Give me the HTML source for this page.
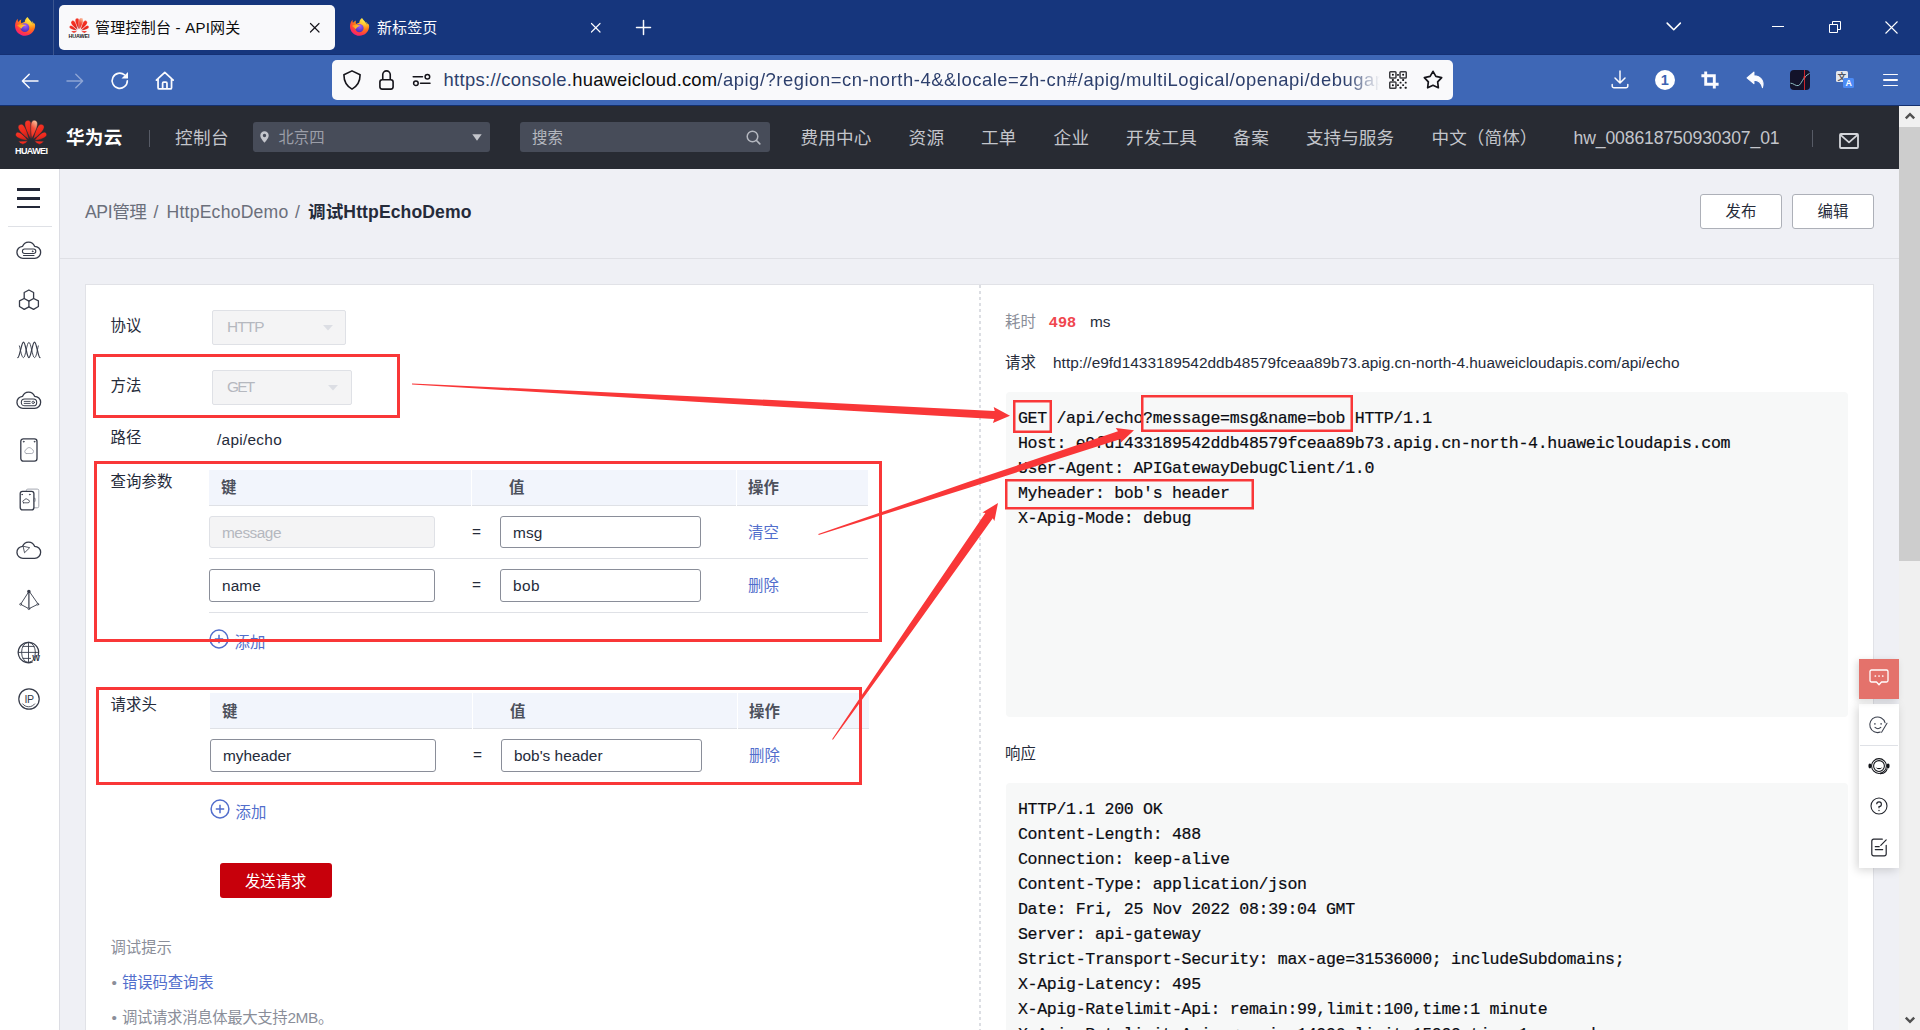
<!DOCTYPE html>
<html lang="zh-CN"><head><meta charset="utf-8"><title>管理控制台 - API网关</title>
<style>

*{box-sizing:border-box;margin:0;padding:0}
html,body{width:1920px;height:1030px;overflow:hidden;background:#eff0f5}
body{position:relative;font-family:"Liberation Sans","Noto Sans CJK SC",sans-serif;font-size:15.4px;color:#252b3a}
.a{position:absolute}
.t{position:absolute;white-space:pre;display:block}
svg{position:absolute;overflow:visible}
#tabbar{left:0;top:0;width:1920px;height:55px;background:#16367d;border-bottom:1px solid #143074}
#toolbar{left:0;top:55px;width:1920px;height:51px;background:#3e67b6;border-bottom:1px solid #14306f}
#hdr{left:0;top:106px;width:1899px;height:63px;background:#282b33}
#side{left:0;top:169px;width:60px;height:861px;background:#fff;border-right:1px solid #dcdde3}
#card{left:85px;top:284px;width:1789px;height:760px;background:#fff;border:1px solid #e1e2e7}
.sel{background:#f4f4f5;border:1px solid #dfe1e6;border-radius:2px}
.inp{background:#fff;border:1px solid #8a8e99;border-radius:3px}
.inp.dis{background:#f4f4f5;border-color:#dfe1e6}
.th{background:#f2f5fc;border-bottom:1px solid #dfe1e6;height:36px}
.hl{height:1px;background:#dfe1e6}
.btn{background:#fff;border:1px solid #adb0b8;border-radius:3px}
.code{background:#f7f8f8;border-radius:4px}
.hbox{background:#474c59;border-radius:3px}

</style></head>
<body>
<div class="a" id="tabbar">
<svg style="left:14px;top:15.8px" width="22" height="22" viewBox="0 0 24 24"><defs><radialGradient id="faa" cx="0.750" cy="0.100" r="1.050"><stop offset="0" stop-color="#fff44f"/><stop offset="0.280" stop-color="#ffc22e"/><stop offset="0.520" stop-color="#ff7a16"/><stop offset="0.780" stop-color="#ff3647"/><stop offset="1" stop-color="#f5158f"/></radialGradient><radialGradient id="fba" cx="0.550" cy="0.250" r="0.800"><stop offset="0" stop-color="#a35cff"/><stop offset="1" stop-color="#3f2bb5"/></radialGradient><linearGradient id="fca" x1="0" y1="0" x2="1" y2="0.400"><stop offset="0" stop-color="#ff8a16"/><stop offset="1" stop-color="#ffd23a"/></linearGradient></defs><path d="M21.600 8.300c-.5-1.200-1.500-2.500-2.300-2.900.6 1.200 1 2.500 1.100 3.400-1.300-3.200-3.500-4.500-5.300-7.300-.1-.2-.2-.3-.3-.5-1.800 1.100-3 3.400-3.100 5.600-1.300.1-2.500.6-3.500 1.400-.1-.1-.2-.2-.3-.2-.4-1.300-.4-2.700 0-3.900-1.400.6-2.500 1.600-3.300 2.600-.6-.7-.5-3-.5-3.500-1.700 1.300-3 4.700-3 7.500 0 6.100 4.900 11 11 11 5.400 0 9.900-3.900 10.800-9.100.3-1.500.1-3-.3-4.100z" fill="url(#faa)"/><circle cx="11.900" cy="12.700" r="4.800" fill="url(#fba)"/><path d="M3.300 10.300C5.600 8.700 9 8.500 13 10.100C10.600 10.700 9 11.700 7.800 13.900C6.800 12.500 5 11.100 3.300 10.300Z" fill="url(#fca)"/></svg>
<div class="a" style="left:53px;top:0;width:1px;height:55px;background:#3c568f"></div>
<div class="a" style="left:59px;top:5px;width:276px;height:45px;background:#f9f9fb;border-radius:5px"></div>
<svg style="left:68.7px;top:17.7px" width="20.3" height="15.2" viewBox="128 150 708 520" preserveAspectRatio="none"><defs><linearGradient id="hwf" x1="0" y1="0" x2="0.300" y2="1"><stop offset="0" stop-color="#f63a2a"/><stop offset="0.600" stop-color="#f0281c"/><stop offset="1" stop-color="#c4251f"/></linearGradient><linearGradient id="hxf" x1="0.600" y1="0" x2="0.300" y2="1"><stop offset="0" stop-color="#fbbf98"/><stop offset="0.450" stop-color="#f4503a"/><stop offset="1" stop-color="#ee2a1e"/></linearGradient></defs><g fill="url(#hwf)" stroke="#f9f9fb" stroke-width="9"><path d="M468.0 538.0 C504.6 355.8 510.6 132.3 400.0 160.0 C286.7 172.6 370.2 380.0 468.0 538.0 Z"/><path d="M496.0 538.0 C593.8 380.0 677.3 172.6 564.0 160.0 C453.4 132.3 459.4 355.8 496.0 538.0 Z"/><path d="M432.0 556.0 C396.1 381.7 317.0 183.4 228.0 252.0 C130.8 308.4 284.3 456.7 432.0 556.0 Z"/><path d="M532.0 556.0 C679.7 456.7 833.2 308.4 736.0 252.0 C647.0 183.4 567.9 381.7 532.0 556.0 Z"/><path d="M412.0 582.0 C321.2 467.1 190.0 350.0 150.0 432.0 C99.5 508.0 267.0 561.9 412.0 582.0 Z"/><path d="M552.0 582.0 C697.0 561.9 864.5 508.0 814.0 432.0 C774.0 350.0 642.8 467.1 552.0 582.0 Z"/><path d="M402 592L205 598Q240 655 300 662Q370 650 402 592Z"/><path d="M562 592L759 598Q724 655 664 662Q594 650 562 592Z"/><path d="M496.0 538.0 C593.8 380.0 677.3 172.6 564.0 160.0 C453.4 132.3 459.4 355.8 496.0 538.0 Z" fill="url(#hxf)"/></g></svg>
<span class="t" style='left:68.5px;top:32.3px;font-size:5.4px;line-height:8px;color:#1a1a1a;font-weight:700;letter-spacing:-0.094px;'>HUAWEI</span>
<span class="t" style='left:95px;top:16px;font-size:15px;line-height:24px;color:#0c0c0d;letter-spacing:0.230px;'>管理控制台 - API网关</span>
<svg style="left:310.25px;top:22.75px;" width="9.5" height="9.5" viewBox="0 0 10 10"><path d="M0.500 0.500L9.500 9.500M9.500 0.500L0.500 9.500" stroke="#15141a" stroke-width="1.2" stroke-linecap="round" fill="none"/></svg>
<svg style="left:349px;top:16.7px" width="21" height="21" viewBox="0 0 24 24"><defs><radialGradient id="fab" cx="0.750" cy="0.100" r="1.050"><stop offset="0" stop-color="#fff44f"/><stop offset="0.280" stop-color="#ffc22e"/><stop offset="0.520" stop-color="#ff7a16"/><stop offset="0.780" stop-color="#ff3647"/><stop offset="1" stop-color="#f5158f"/></radialGradient><radialGradient id="fbb" cx="0.550" cy="0.250" r="0.800"><stop offset="0" stop-color="#a35cff"/><stop offset="1" stop-color="#3f2bb5"/></radialGradient><linearGradient id="fcb" x1="0" y1="0" x2="1" y2="0.400"><stop offset="0" stop-color="#ff8a16"/><stop offset="1" stop-color="#ffd23a"/></linearGradient></defs><path d="M21.600 8.300c-.5-1.200-1.500-2.500-2.300-2.900.6 1.200 1 2.500 1.100 3.400-1.300-3.200-3.500-4.500-5.300-7.300-.1-.2-.2-.3-.3-.5-1.800 1.100-3 3.400-3.100 5.600-1.300.1-2.500.6-3.500 1.400-.1-.1-.2-.2-.3-.2-.4-1.300-.4-2.700 0-3.900-1.400.6-2.500 1.600-3.300 2.600-.6-.7-.5-3-.5-3.500-1.700 1.300-3 4.700-3 7.500 0 6.100 4.900 11 11 11 5.400 0 9.900-3.900 10.800-9.100.3-1.500.1-3-.3-4.100z" fill="url(#fab)"/><circle cx="11.900" cy="12.700" r="4.800" fill="url(#fbb)"/><path d="M3.300 10.300C5.600 8.700 9 8.500 13 10.100C10.600 10.700 9 11.700 7.800 13.900C6.800 12.500 5 11.100 3.300 10.300Z" fill="url(#fcb)"/></svg>
<span class="t" style='left:377px;top:16px;font-size:15px;line-height:24px;color:#fbfbfe;letter-spacing:0.121px;'>新标签页</span>
<svg style="left:591.25px;top:22.75px;" width="9.5" height="9.5" viewBox="0 0 10 10"><path d="M0.500 0.500L9.500 9.500M9.500 0.500L0.500 9.500" stroke="#fbfbfe" stroke-width="1.2" stroke-linecap="round" fill="none"/></svg>
<svg style="left:636px;top:20px;" width="15" height="15" viewBox="0 0 15 15"><path d="M7.500 0.500V14.500M0.500 7.500H14.500" stroke="#fbfbfe" stroke-width="1.500" stroke-linecap="round"/></svg>
<svg style="left:1666.25px;top:22.4px;" width="15.5" height="8.8" viewBox="0 0 14 8"><path d="M1 1L7 7L13 1" stroke="#fff" stroke-width="1.400" fill="none" stroke-linecap="round" stroke-linejoin="round"/></svg>
<div class="a" style="left:1772px;top:26px;width:12px;height:1px;background:#fff"></div>
<svg style="left:1829px;top:21px;" width="12" height="12" viewBox="0 0 12 12"><path d="M0.500 3.500H8.500V11.500H0.500ZM3.500 3.500V0.500H11.500V8.500H8.500" stroke="#fff" stroke-width="1" fill="none"/></svg>
<svg style="left:1884.5px;top:20.5px;" width="13" height="13" viewBox="0 0 13 13"><path d="M0.500 0.500L12.500 12.500M12.500 0.500L0.500 12.500" stroke="#fff" stroke-width="1.100" fill="none"/></svg>
</div>
<div class="a" id="toolbar">
<svg style="left:21px;top:17.7px;" width="18" height="16" viewBox="0 0 18 16"><path d="M17 8H1.500M8.200 1.200L1.400 8L8.200 14.800" stroke="#fbfbfe" stroke-width="1.450" fill="none" stroke-linecap="round" stroke-linejoin="round"/></svg>
<svg style="left:66px;top:17.7px;" width="18" height="16" viewBox="0 0 18 16"><path d="M1 8H16.500M9.800 1.200L16.600 8L9.800 14.800" stroke="#fbfbfe" stroke-width="1.450" fill="none" stroke-linecap="round" stroke-linejoin="round" opacity="0.420"/></svg>
<svg style="left:110.25px;top:16.25px;" width="19.5" height="19.5" viewBox="0 0 18 18"><path d="M16 9A7 7 0 1 1 13.400 3.550" stroke="#fbfbfe" stroke-width="1.500" fill="none" stroke-linecap="round"/><path d="M16.600 1V7H10.600Z" fill="#fbfbfe"/></svg>
<svg style="left:154.5px;top:15.8px;" width="19.6" height="19.6" viewBox="0 0 18 18"><path d="M1.300 8.300L9 1.200L16.700 8.300M2.800 7V15.300A1.200 1.200 0 0 0 4 16.500H14A1.200 1.200 0 0 0 15.200 15.300V7M7 16.300V11.300A1 1 0 0 1 8 10.300H10A1 1 0 0 1 11 11.300V16.300" stroke="#fbfbfe" stroke-width="1.600" fill="none" stroke-linecap="round" stroke-linejoin="round"/></svg>
<div class="a" style="left:332px;top:5px;width:1121px;height:40px;background:#f9f9fb;border-radius:5px"></div>
<svg style="left:343.1px;top:14.9px;" width="18" height="20" viewBox="0 0 18 20"><path d="M9 0.900L17.100 4.700C17.100 11.500 14.500 16 9 19.100C3.500 16 0.900 11.500 0.900 4.700Z" stroke="#15141a" stroke-width="1.600" fill="none" stroke-linejoin="round"/></svg>
<svg style="left:379.3px;top:14.8px;" width="15" height="20" viewBox="0 0 15 20"><rect x="0.900" y="9.800" width="13.200" height="9.300" rx="2.300" stroke="#15141a" stroke-width="1.600" fill="none"/><path d="M3.750 9.500V4.600A3.750 3.750 0 0 1 11.250 4.600V9.500" stroke="#15141a" stroke-width="1.600" fill="none"/></svg>
<svg style="left:412.3px;top:18.9px;" width="19" height="12" viewBox="0 0 19 12"><path d="M1.200 2.800H10.500M8.500 9.200H18" stroke="#15141a" stroke-width="1.500" stroke-linecap="round"/><circle cx="15.400" cy="2.800" r="2.300" stroke="#15141a" stroke-width="1.500" fill="none"/><circle cx="3.900" cy="9.200" r="2.300" stroke="#15141a" stroke-width="1.500" fill="none"/></svg>
<span class="t" style='left:443.5px;top:11.3px;font-size:18.4px;line-height:28px;color:#2d3f6c;letter-spacing:0.319px;'>https://console.</span>
<span class="t" style='left:572.3px;top:11.3px;font-size:18.4px;line-height:28px;color:#0c0c0d;letter-spacing:0.193px;'>huaweicloud.com</span>
<span class="t" style='left:717.3px;top:11.3px;font-size:18.4px;line-height:28px;color:#2d3f6c;letter-spacing:0.540px;width:663px;overflow:hidden;-webkit-mask-image:linear-gradient(90deg,#000 630px,transparent 663px);mask-image:linear-gradient(90deg,#000 630px,transparent 663px);'>/apig/?region=cn-north-4&amp;&amp;locale=zh-cn#/apig/multiLogical/openapi/debugap</span>
<svg style="left:1389px;top:16px;" width="18" height="18" viewBox="0 0 18 18"><rect x="0.75" y="0.75" width="6.21" height="6.21" rx="0.800" stroke="#3b3b3f" stroke-width="1.500" fill="none"/><circle cx="3.86" cy="3.86" r="1" fill="#0c0c0d"/><rect x="11.04" y="0.75" width="6.21" height="6.21" rx="0.800" stroke="#3b3b3f" stroke-width="1.500" fill="none"/><circle cx="14.14" cy="3.86" r="1" fill="#0c0c0d"/><rect x="0.75" y="11.04" width="6.21" height="6.21" rx="0.800" stroke="#3b3b3f" stroke-width="1.500" fill="none"/><circle cx="3.86" cy="14.14" r="1" fill="#0c0c0d"/><rect x="8.06" y="2.92" width="1.87" height="1.87" rx="0.500" fill="#1c1c1e"/><rect x="2.92" y="8.06" width="1.87" height="1.87" rx="0.500" fill="#1c1c1e"/><rect x="8.06" y="8.06" width="1.87" height="1.87" rx="0.500" fill="#1c1c1e"/><rect x="13.21" y="8.06" width="1.87" height="1.87" rx="0.500" fill="#1c1c1e"/><rect x="10.64" y="10.64" width="1.87" height="1.87" rx="0.500" fill="#1c1c1e"/><rect x="15.78" y="10.64" width="1.87" height="1.87" rx="0.500" fill="#1c1c1e"/><rect x="8.06" y="13.21" width="1.87" height="1.87" rx="0.500" fill="#1c1c1e"/><rect x="13.21" y="13.21" width="1.87" height="1.87" rx="0.500" fill="#1c1c1e"/><rect x="10.64" y="15.78" width="1.87" height="1.87" rx="0.500" fill="#1c1c1e"/><rect x="15.78" y="15.78" width="1.87" height="1.87" rx="0.500" fill="#1c1c1e"/></svg>
<svg style="left:1423px;top:15.4px;" width="20" height="19" viewBox="0 0 20 19"><path d="M10.00 1.30L12.88 6.44L18.65 7.59L14.66 11.91L15.35 17.76L10.00 15.30L4.65 17.76L5.34 11.91L1.35 7.59L7.12 6.44Z" stroke="#15141a" stroke-width="1.700" fill="none" stroke-linejoin="round"/></svg>
<svg style="left:1610.5px;top:14.7px;" width="18" height="19" viewBox="0 0 18 19"><path d="M9 1V12.500M4 8L9 13L14 8M1.200 14.500V16A1.800 1.800 0 0 0 3 17.800H15A1.800 1.800 0 0 0 16.800 16V14.500" stroke="#fbfbfe" stroke-width="1.500" fill="none" stroke-linecap="round" stroke-linejoin="round"/></svg>
<div class="a" style="left:1655px;top:15px;width:20px;height:20px;border-radius:10px;background:#fff"></div>
<span class="t" style='left:1660.8px;top:17.3px;font-size:14.5px;line-height:16px;color:#3b63b2;font-weight:700;'>1</span>
<svg style="left:1701px;top:15.8px;" width="18" height="18" viewBox="0 0 18 18"><path d="M4.700 0.400V13.300H17.600M0.400 4.700H13.300V17.600" stroke="#fbfbfe" stroke-width="2.900" fill="none"/></svg>
<svg style="left:1745.8px;top:15.8px;" width="19" height="18" viewBox="0 0 18 17"><path d="M7.500 1L1 6.500L7.500 12V8.600C11.500 8.600 14.500 10.500 15.600 15.800C17.600 9.500 14 4.600 7.500 4.400Z" fill="#fbfbfe" stroke="#fbfbfe" stroke-width="1" stroke-linejoin="round"/></svg>
<div class="a" style="left:1790px;top:15px;width:20px;height:20px;border-radius:4px;background:#13122a;overflow:hidden"><div class="a" style="left:14px;top:0;width:1px;height:20px;background:#c9252c"></div></div>
<svg style="left:1790px;top:15px;" width="20" height="20" viewBox="0 0 20 20"><path d="M0.500 13.200C3.500 13 5.500 16.500 8.500 15.500S12.500 7 19.500 3.500" stroke="#9fd3d6" stroke-width="0.900" fill="none"/><circle cx="14.500" cy="7.300" r="1.100" fill="#f03a3a"/></svg>
<div class="a" style="left:1836px;top:16.200px;width:11.500px;height:10.500px;border-radius:1.500px;background:#e3e6ec"></div>
<span class="t" style='left:1837.4px;top:16.6px;font-size:8.6px;line-height:10px;color:#4f5562;font-weight:700;'>文</span>
<div class="a" style="left:1843.300px;top:23px;width:10.400px;height:10.400px;border-radius:1.500px;background:#4c8bf5"></div>
<span class="t" style='left:1845.5px;top:23.3px;font-size:8.8px;line-height:10px;color:#fff;font-weight:700;'>A</span>
<div class="a" style="left:1882.500px;top:18.8px;width:15px;height:1.400px;background:#fbfbfe;border-radius:1px"></div>
<div class="a" style="left:1882.500px;top:24.3px;width:15px;height:1.400px;background:#fbfbfe;border-radius:1px"></div>
<div class="a" style="left:1882.500px;top:29.8px;width:15px;height:1.400px;background:#fbfbfe;border-radius:1px"></div>
</div>
<div class="a" id="hdr"></div>
<svg style="left:15.2px;top:119.6px" width="32.3" height="24.8" viewBox="128 150 708 520" preserveAspectRatio="none"><defs><linearGradient id="hwh" x1="0" y1="0" x2="0.300" y2="1"><stop offset="0" stop-color="#f63a2a"/><stop offset="0.600" stop-color="#f0281c"/><stop offset="1" stop-color="#c4251f"/></linearGradient><linearGradient id="hxh" x1="0.600" y1="0" x2="0.300" y2="1"><stop offset="0" stop-color="#fbbf98"/><stop offset="0.450" stop-color="#f4503a"/><stop offset="1" stop-color="#ee2a1e"/></linearGradient></defs><g fill="url(#hwh)" stroke="#282b33" stroke-width="9"><path d="M468.0 538.0 C504.6 355.8 510.6 132.3 400.0 160.0 C286.7 172.6 370.2 380.0 468.0 538.0 Z"/><path d="M496.0 538.0 C593.8 380.0 677.3 172.6 564.0 160.0 C453.4 132.3 459.4 355.8 496.0 538.0 Z"/><path d="M432.0 556.0 C396.1 381.7 317.0 183.4 228.0 252.0 C130.8 308.4 284.3 456.7 432.0 556.0 Z"/><path d="M532.0 556.0 C679.7 456.7 833.2 308.4 736.0 252.0 C647.0 183.4 567.9 381.7 532.0 556.0 Z"/><path d="M412.0 582.0 C321.2 467.1 190.0 350.0 150.0 432.0 C99.5 508.0 267.0 561.9 412.0 582.0 Z"/><path d="M552.0 582.0 C697.0 561.9 864.5 508.0 814.0 432.0 C774.0 350.0 642.8 467.1 552.0 582.0 Z"/><path d="M402 592L205 598Q240 655 300 662Q370 650 402 592Z"/><path d="M562 592L759 598Q724 655 664 662Q594 650 562 592Z"/><path d="M496.0 538.0 C593.8 380.0 677.3 172.6 564.0 160.0 C453.4 132.3 459.4 355.8 496.0 538.0 Z" fill="url(#hxh)"/></g></svg>
<span class="t" style='left:15px;top:145.9px;font-size:9px;line-height:10px;color:#fff;font-weight:700;letter-spacing:-0.617px;'>HUAWEI</span>
<span class="t" style='left:66px;top:126.2px;font-size:18.6px;line-height:24px;color:#fff;font-weight:700;letter-spacing:0.234px;'>华为云</span>
<div class="a" style="left:149px;top:130px;width:1px;height:17px;background:#575b66"></div>
<span class="t" style='left:175px;top:126.2px;font-size:17.6px;line-height:24px;color:#c3c5cb;letter-spacing:0.401px;'>控制台</span>
<div class="a hbox" style="left:253px;top:122px;width:237px;height:30px"></div>
<svg style="left:259.5px;top:131px;" width="9" height="12" viewBox="0 0 9 12"><path d="M4.500 0.300A4.200 4.200 0 0 0 0.300 4.500C0.300 7.500 4.500 11.700 4.500 11.700S8.700 7.500 8.700 4.500A4.200 4.200 0 0 0 4.500 0.300ZM4.500 6.200A1.700 1.700 0 1 1 4.500 2.800A1.700 1.700 0 0 1 4.500 6.200Z" fill="#c3c5cb" fill-rule="evenodd"/></svg>
<span class="t" style='left:278.5px;top:126px;font-size:15.4px;line-height:24px;color:#9b9ea8;letter-spacing:-0.062px;'>北京四</span>
<svg style="left:472px;top:134px;" width="10" height="7" viewBox="0 0 10 7"><path d="M0.300 0.300H9.700L5 6.800Z" fill="#c3c5cb"/></svg>
<div class="a hbox" style="left:520px;top:122px;width:250px;height:30px"></div>
<span class="t" style='left:532px;top:126px;font-size:15.4px;line-height:24px;color:#b4b7bf;letter-spacing:0.102px;'>搜索</span>
<svg style="left:746px;top:129.5px;" width="15" height="15" viewBox="0 0 15 15"><circle cx="6.500" cy="6.500" r="5.300" stroke="#b4b7bf" stroke-width="1.500" fill="none"/><path d="M10.500 10.500L13.800 13.800" stroke="#b4b7bf" stroke-width="1.700" stroke-linecap="round"/></svg>
<span class="t" style='left:800.5px;top:126.2px;font-size:17.6px;line-height:24px;color:#c3c5cb;letter-spacing:0.152px;'>费用中心</span>
<span class="t" style='left:908.5px;top:126.2px;font-size:17.6px;line-height:24px;color:#c3c5cb;letter-spacing:0.398px;'>资源</span>
<span class="t" style='left:981px;top:126.2px;font-size:17.6px;line-height:24px;color:#c3c5cb;letter-spacing:0.148px;'>工单</span>
<span class="t" style='left:1053.5px;top:126.2px;font-size:17.6px;line-height:24px;color:#c3c5cb;letter-spacing:0.398px;'>企业</span>
<span class="t" style='left:1126px;top:126.2px;font-size:17.6px;line-height:24px;color:#c3c5cb;letter-spacing:0.152px;'>开发工具</span>
<span class="t" style='left:1233px;top:126.2px;font-size:17.6px;line-height:24px;color:#c3c5cb;letter-spacing:0.648px;'>备案</span>
<span class="t" style='left:1306px;top:126.2px;font-size:17.6px;line-height:24px;color:#c3c5cb;'>支持与服务</span>
<span class="t" style='left:1431.5px;top:126.2px;font-size:17.6px;line-height:24px;color:#c3c5cb;letter-spacing:0.070px;'>中文（简体）</span>
<span class="t" style='left:1573.5px;top:126.2px;font-size:17.6px;line-height:24px;color:#c3c5cb;letter-spacing:-0.115px;'>hw_008618750930307_01</span>
<div class="a" style="left:1812px;top:130px;width:1px;height:17px;background:#575b66"></div>
<svg style="left:1838.5px;top:132.5px;" width="20" height="16" viewBox="0 0 20 16"><rect x="1" y="1" width="18" height="14" rx="1" stroke="#d4d6db" stroke-width="1.800" fill="none"/><path d="M1.500 1.800L10 9.300L18.500 1.800" stroke="#d4d6db" stroke-width="1.800" fill="none" stroke-linejoin="round"/></svg>
<div class="a" style="left:1899px;top:106px;width:21px;height:924px;background:#f0f0f0"></div>
<div class="a" style="left:1899px;top:127px;width:21px;height:434px;background:#cdcdcd"></div>
<svg style="left:1904.5px;top:113px;" width="10" height="6" viewBox="0 0 10 6"><path d="M0.800 5.400L5 1.200L9.200 5.400" stroke="#505050" stroke-width="2.400" fill="none"/></svg>
<svg style="left:1904.5px;top:1017px;" width="10" height="6" viewBox="0 0 10 6"><path d="M0.800 0.600L5 4.800L9.200 0.600" stroke="#505050" stroke-width="2.400" fill="none"/></svg>
<div class="a" id="side"></div>
<div class="a" style="left:17.300px;top:188.1px;width:22.900px;height:2.8px;background:#232838"></div>
<div class="a" style="left:17.300px;top:197px;width:22.900px;height:2.8px;background:#232838"></div>
<div class="a" style="left:17.300px;top:205.8px;width:22.900px;height:2.3px;background:#232838"></div>
<div class="a" style="left:8px;top:226px;width:44px;height:1px;background:#dfe1e6"></div>
<svg style="left:16.9px;top:238px;" width="24" height="24" viewBox="0 0 24 24"><g stroke="#363b49" stroke-width="1.300" fill="none" stroke-linecap="round" stroke-linejoin="round"><path d="M6.300 20.300H17.700A6 6 0 1 0 17.600 8.300A6.350 6.350 0 0 0 5.600 8.300A6 6 0 0 0 6.300 20.300Z"/><rect x="5.400" y="11" width="13.400" height="4.500" rx="2.200" stroke-width="1.100"/><circle cx="15.600" cy="13.300" r="0.500" fill="#363b49" stroke-width="0.700"/><path d="M6.500 17.500H17" stroke-width="1"/></g></svg>
<svg style="left:16.9px;top:288.3px;" width="24" height="24" viewBox="0 0 24 24"><g stroke="#363b49" stroke-width="1.300" fill="none" stroke-linecap="round" stroke-linejoin="round"><path d="M11.900 2L16.600 4.500V10.500L11.900 13.100L7.200 10.500V4.500Z"/><path d="M7.200 10.500L2.500 12.900V18.500L7.200 21.400L11.900 18.900V13.100"/><path d="M16.600 10.500L21.400 12.900V18.500L16.600 21.400L11.900 18.900"/></g></svg>
<svg style="left:16.9px;top:338px;" width="24" height="24" viewBox="0 0 24 24"><g stroke="#363b49" stroke-width="1.300" fill="none" stroke-linecap="round" stroke-linejoin="round"><path d="M0.800 19.600C2.800 19.600 4.400 4 6.500 4C8.600 4 9.800 19.600 11.900 19.600C14 19.600 15.400 4 17.500 4C19.600 4 21 19.600 23 19.600" stroke-width="1.250"/><path d="M2.400 7.900C3.600 12 4.600 19.600 6.500 19.600C8.600 19.600 9.800 4.300 11.900 4.300C14 4.300 15.400 19.600 17.500 19.600C19.400 19.600 20.200 12 21.300 7.900" stroke-width="0.900"/></g></svg>
<svg style="left:16.9px;top:388px;" width="24" height="24" viewBox="0 0 24 24"><g stroke="#363b49" stroke-width="1.300" fill="none" stroke-linecap="round" stroke-linejoin="round"><path d="M6.300 20.300H17.700A6 6 0 1 0 17.600 8.300A6.350 6.350 0 0 0 5.600 8.300A6 6 0 0 0 6.300 20.300Z"/><rect x="4.300" y="11" width="15.400" height="6.800" rx="3.400" stroke-width="1.100"/><path d="M7.200 13.400H13.200M7.200 15.400H13.200" stroke-width="0.900"/><circle cx="16.200" cy="14.400" r="1.200" stroke-width="0.900"/></g></svg>
<svg style="left:16.9px;top:438px;" width="24" height="24" viewBox="0 0 24 24"><g stroke="#363b49" stroke-width="1.300" fill="none" stroke-linecap="round" stroke-linejoin="round"><rect x="3.800" y="0.800" width="16.200" height="22.400" rx="2.600"/><circle cx="6.700" cy="3.700" r="0.450" fill="#363b49" stroke-width="0.700"/><circle cx="17.500" cy="3.700" r="0.450" fill="#363b49" stroke-width="0.700"/><path d="M9.300 15.500H14.800A2.100 2.100 0 0 0 15 11.400A3.100 3.100 0 0 0 9.200 11.700A1.950 1.950 0 0 0 9.300 15.500Z" stroke="#9a9ea8" stroke-width="0.800"/></g></svg>
<svg style="left:16.9px;top:488px;" width="24" height="24" viewBox="0 0 24 24"><g stroke="#363b49" stroke-width="1.300" fill="none" stroke-linecap="round" stroke-linejoin="round"><path d="M9.300 3V2.600A1.500 1.500 0 0 1 10.800 1.100H20.300A1.500 1.500 0 0 1 21.800 2.600V18.300A1.500 1.500 0 0 1 20.300 19.800H17.300" stroke="#9a9ea8" stroke-width="0.900"/><rect x="17" y="10.300" width="1.500" height="3.200" rx="0.700" stroke="#9a9ea8" stroke-width="0.700"/><rect x="3.200" y="3.300" width="13.700" height="18.600" rx="2.300"/><circle cx="5.100" cy="6.600" r="0.400" fill="#363b49" stroke-width="0.700"/><circle cx="12.800" cy="6.600" r="0.400" fill="#363b49" stroke-width="0.700"/><path d="M6.600 14.800H11A1.400 1.400 0 0 0 11.100 12A2.100 2.100 0 0 0 7.200 12.300A1.300 1.300 0 0 0 6.600 14.800Z" stroke-width="0.800"/></g></svg>
<svg style="left:16.9px;top:538px;" width="24" height="24" viewBox="0 0 24 24"><g stroke="#363b49" stroke-width="1.300" fill="none" stroke-linecap="round" stroke-linejoin="round"><path d="M6.300 20.300H17.700A6 6 0 1 0 17.600 8.300A6.350 6.350 0 0 0 5.600 8.300A6 6 0 0 0 6.300 20.300Z"/><path d="M6.500 8.300L12.700 9.700L7.800 14.500Z" stroke-width="0.850"/></g></svg>
<svg style="left:16.9px;top:588px;" width="24" height="24" viewBox="0 0 24 24"><g stroke="#363b49" stroke-width="1.300" fill="none" stroke-linecap="round" stroke-linejoin="round"><path d="M11.900 3.500L3.600 16.300L11.900 20.700L20.800 16.300Z" stroke-width="0.900"/><path d="M11.900 3.500V20.700" stroke-width="1.200"/><circle cx="11.900" cy="3.500" r="1.100" fill="#363b49"/><circle cx="3.600" cy="16.300" r="0.900" fill="#fff" stroke-width="0.800"/><circle cx="20.800" cy="16.300" r="0.900" fill="#fff" stroke-width="0.800"/><circle cx="11.900" cy="20.700" r="0.900" fill="#fff" stroke-width="0.800"/></g></svg>
<svg style="left:16.9px;top:640px;" width="24" height="24" viewBox="0 0 24 24"><g stroke="#363b49" stroke-width="1.300" fill="none" stroke-linecap="round" stroke-linejoin="round"><path d="M15.300 21.950A10.200 10.200 0 1 1 21.100 15.800" stroke-width="1.250"/><ellipse cx="11.500" cy="12.400" rx="6.900" ry="10" stroke-width="0.900"/><path d="M1.500 12.400H21.500M5.800 6.400H17.200M6 18.400H13.600M11.500 2.300V22.400" stroke-width="0.900"/></g></svg>
<span class="t" style='left:32.2px;top:654.3px;font-size:8.2px;line-height:10px;color:#363b49;font-weight:700;letter-spacing:-1.734px;'>W</span>
<svg style="left:16.9px;top:687.4px;" width="24" height="24" viewBox="0 0 24 24"><g stroke="#363b49" stroke-width="1.300" fill="none" stroke-linecap="round" stroke-linejoin="round"><circle cx="12" cy="12" r="10.200" stroke-width="1.200"/><path d="M5.700 16.900A7.400 7.400 0 0 0 17.700 16.900" stroke-width="0.850"/></g></svg>
<span class="t" style='left:24.6px;top:693.2px;font-size:10.6px;line-height:12px;color:#363b49;letter-spacing:-0.658px;'>IP</span>
<span class="t" style='left:85px;top:199.5px;font-size:17.6px;line-height:24px;color:#6b6f7b;letter-spacing:-0.409px;'>API管理</span>
<span class="t" style='left:153.5px;top:199.5px;font-size:17.6px;line-height:24px;color:#6b6f7b;'>/</span>
<span class="t" style='left:166.5px;top:199.5px;font-size:17.6px;line-height:24px;color:#6b6f7b;letter-spacing:0.224px;'>HttpEchoDemo</span>
<span class="t" style='left:295px;top:199.5px;font-size:17.6px;line-height:24px;color:#6b6f7b;'>/</span>
<span class="t" style='left:308px;top:199.5px;font-size:17.6px;line-height:24px;color:#252b3a;font-weight:700;letter-spacing:0.088px;'>调试HttpEchoDemo</span>
<div class="a btn" style="left:1700px;top:194px;width:82px;height:35px"></div>
<div class="a btn" style="left:1792px;top:194px;width:82px;height:35px"></div>
<span class="t" style='left:1725.5px;top:200.1px;font-size:15.4px;line-height:24px;color:#252b3a;letter-spacing:0.102px;'>发布</span>
<span class="t" style='left:1817.5px;top:200.1px;font-size:15.4px;line-height:24px;color:#252b3a;letter-spacing:0.102px;'>编辑</span>
<div class="a" style="left:60px;top:258px;width:1839px;height:1px;background:#dfe0e5"></div>
<div class="a" id="card"></div>
<div class="a" style="left:979px;top:285px;width:2px;height:745px;background:repeating-linear-gradient(180deg,#dcdee3 0,#dcdee3 3px,transparent 3px,transparent 6px)"></div>
<span class="t" style='left:110.5px;top:314px;font-size:15.4px;line-height:24px;color:#252b3a;letter-spacing:0.102px;'>协议</span>
<div class="a sel" style="left:212px;top:310px;width:134px;height:35px"></div>
<span class="t" style='left:227px;top:314.9px;font-size:15.4px;line-height:24px;color:#b5b8bf;letter-spacing:-0.922px;'>HTTP</span>
<svg style="left:322.5px;top:325.05px;" width="10" height="5.5" viewBox="0 0 9 5"><path d="M0 0H9L4.500 5Z" fill="#dcdee4"/></svg>
<span class="t" style='left:110.5px;top:374px;font-size:15.4px;line-height:24px;color:#252b3a;letter-spacing:0.102px;'>方法</span>
<div class="a sel" style="left:212px;top:370px;width:140px;height:35px"></div>
<span class="t" style='left:227px;top:374.9px;font-size:15.4px;line-height:24px;color:#b5b8bf;letter-spacing:-1.714px;'>GET</span>
<svg style="left:328.3px;top:385.05px;" width="10" height="5.5" viewBox="0 0 9 5"><path d="M0 0H9L4.500 5Z" fill="#dcdee4"/></svg>
<span class="t" style='left:110.5px;top:426px;font-size:15.4px;line-height:24px;color:#252b3a;letter-spacing:0.102px;'>路径</span>
<span class="t" style='left:217px;top:427.5px;font-size:15.4px;line-height:24px;color:#252b3a;letter-spacing:0.281px;'>/api/echo</span>
<span class="t" style='left:110.5px;top:470.3px;font-size:15.4px;line-height:24px;color:#252b3a;letter-spacing:0.130px;'>查询参数</span>
<div class="a th" style="left:209px;top:470px;width:262px"></div>
<div class="a th" style="left:472px;top:470px;width:263.500px"></div>
<div class="a th" style="left:736.5px;top:470px;width:131.500px"></div>
<span class="t" style='left:221px;top:475.8px;font-size:15.4px;line-height:24px;color:#4d515c;font-weight:700;letter-spacing:0.094px;'>键</span>
<span class="t" style='left:509px;top:475.8px;font-size:15.4px;line-height:24px;color:#4d515c;font-weight:700;letter-spacing:0.094px;'>值</span>
<span class="t" style='left:748px;top:475.8px;font-size:15.4px;line-height:24px;color:#4d515c;font-weight:700;letter-spacing:0.102px;'>操作</span>
<div class="a inp dis" style="left:209px;top:516px;width:226px;height:32px"></div>
<span class="t" style='left:222px;top:521px;font-size:15.4px;line-height:24px;color:#b5b8bf;letter-spacing:-0.493px;'>message</span>
<span class="t" style='left:472px;top:519.5px;font-size:15.4px;line-height:24px;color:#252b3a;'>=</span>
<div class="a inp" style="left:500px;top:516px;width:201px;height:32px"></div>
<span class="t" style='left:513px;top:521px;font-size:15.4px;line-height:24px;color:#252b3a;letter-spacing:0.141px;'>msg</span>
<span class="t" style='left:748px;top:521px;font-size:15.4px;line-height:24px;color:#526ecc;letter-spacing:0.102px;'>清空</span>
<div class="a inp" style="left:209px;top:569px;width:226px;height:33px"></div>
<span class="t" style='left:222px;top:574px;font-size:15.4px;line-height:24px;color:#252b3a;letter-spacing:0.125px;'>name</span>
<span class="t" style='left:472px;top:572.5px;font-size:15.4px;line-height:24px;color:#252b3a;'>=</span>
<div class="a inp" style="left:500px;top:569px;width:201px;height:33px"></div>
<span class="t" style='left:513px;top:574px;font-size:15.4px;line-height:24px;color:#252b3a;letter-spacing:0.438px;'>bob</span>
<span class="t" style='left:748px;top:574px;font-size:15.4px;line-height:24px;color:#526ecc;letter-spacing:0.102px;'>删除</span>
<div class="a hl" style="left:209px;top:558px;width:659px"></div>
<div class="a hl" style="left:209px;top:612px;width:659px"></div>
<svg style="left:208.5px;top:629px;" width="20" height="20" viewBox="0 0 20 20"><circle cx="10" cy="10" r="8.900" stroke="#526ecc" stroke-width="1.500" fill="none"/><path d="M10 5.800V14.200M5.800 10H14.200" stroke="#526ecc" stroke-width="1.500"/></svg>
<span class="t" style='left:234.5px;top:630.8px;font-size:15.4px;line-height:24px;color:#526ecc;letter-spacing:0.102px;'>添加</span>
<span class="t" style='left:110.5px;top:693.3px;font-size:15.4px;line-height:24px;color:#252b3a;letter-spacing:0.171px;'>请求头</span>
<div class="a th" style="left:210px;top:693px;width:262px"></div>
<div class="a th" style="left:473px;top:693px;width:263.500px"></div>
<div class="a th" style="left:737.5px;top:693px;width:131.500px"></div>
<span class="t" style='left:222px;top:699.8px;font-size:15.4px;line-height:24px;color:#4d515c;font-weight:700;letter-spacing:0.094px;'>键</span>
<span class="t" style='left:510px;top:699.8px;font-size:15.4px;line-height:24px;color:#4d515c;font-weight:700;letter-spacing:0.094px;'>值</span>
<span class="t" style='left:749px;top:699.8px;font-size:15.4px;line-height:24px;color:#4d515c;font-weight:700;letter-spacing:0.102px;'>操作</span>
<div class="a inp" style="left:210px;top:739px;width:226px;height:33px"></div>
<span class="t" style='left:223px;top:744px;font-size:15.4px;line-height:24px;color:#252b3a;letter-spacing:-0.057px;'>myheader</span>
<span class="t" style='left:473px;top:742.5px;font-size:15.4px;line-height:24px;color:#252b3a;'>=</span>
<div class="a inp" style="left:501px;top:739px;width:201px;height:33px"></div>
<span class="t" style='left:514px;top:744px;font-size:15.4px;line-height:24px;color:#252b3a;'>bob's header</span>
<span class="t" style='left:749px;top:744px;font-size:15.4px;line-height:24px;color:#526ecc;letter-spacing:0.102px;'>删除</span>
<svg style="left:209.5px;top:799px;" width="20" height="20" viewBox="0 0 20 20"><circle cx="10" cy="10" r="8.900" stroke="#526ecc" stroke-width="1.500" fill="none"/><path d="M10 5.800V14.200M5.800 10H14.200" stroke="#526ecc" stroke-width="1.500"/></svg>
<span class="t" style='left:235.5px;top:800.8px;font-size:15.4px;line-height:24px;color:#526ecc;letter-spacing:0.102px;'>添加</span>
<div class="a" style="left:220px;top:863px;width:112px;height:35px;background:#c7000b;border-radius:3px"></div>
<span class="t" style='left:245px;top:869.5px;font-size:15.4px;line-height:24px;color:#fff;letter-spacing:-0.020px;'>发送请求</span>
<span class="t" style='left:110.5px;top:935.5px;font-size:15.4px;line-height:24px;color:#8a8e99;letter-spacing:-0.020px;'>调试提示</span>
<span class="t" style='left:111.5px;top:970.5px;font-size:15.4px;line-height:24px;color:#8a8e99;'>•</span>
<span class="t" style='left:122px;top:971px;font-size:15.4px;line-height:24px;color:#526ecc;letter-spacing:-0.160px;'>错误码查询表</span>
<span class="t" style='left:111.5px;top:1005.5px;font-size:15.4px;line-height:24px;color:#8a8e99;'>•</span>
<span class="t" style='left:122px;top:1005.5px;font-size:15.4px;line-height:24px;color:#8a8e99;letter-spacing:-0.356px;'>调试请求消息体最大支持2MB。</span>
<span class="t" style='left:1005px;top:309.5px;font-size:15.4px;line-height:24px;color:#8a8e99;letter-spacing:0.102px;'>耗时</span>
<span class="t" style='left:1049px;top:309.5px;font-size:15.4px;line-height:24px;color:#f0464e;font-weight:700;letter-spacing:0.604px;'>498</span>
<span class="t" style='left:1090px;top:309.5px;font-size:15.4px;line-height:24px;color:#252b3a;letter-spacing:-0.016px;'>ms</span>
<span class="t" style='left:1005px;top:350.5px;font-size:15.4px;line-height:24px;color:#252b3a;letter-spacing:0.102px;'>请求</span>
<span class="t" style='left:1053px;top:350.5px;font-size:15.4px;line-height:24px;color:#252b3a;letter-spacing:0.022px;'>http://e9fd1433189542ddb48579fceaa89b73.apig.cn-north-4.huaweicloudapis.com/api/echo</span>
<div class="a code" style="left:1006px;top:392px;width:1842px;height:324.500px;width:842px"></div>
<span class="t" style='left:1018px;top:406.1px;font-size:16.6px;line-height:25px;color:#0b0c12;font-family:"Liberation Mono","Noto Sans Mono CJK SC",monospace;letter-spacing:-0.333px;-webkit-text-stroke:0.200px #0b0c12;'>GET /api/echo?message=msg&amp;name=bob HTTP/1.1</span>
<span class="t" style='left:1018px;top:431.1px;font-size:16.6px;line-height:25px;color:#0b0c12;font-family:"Liberation Mono","Noto Sans Mono CJK SC",monospace;letter-spacing:-0.333px;-webkit-text-stroke:0.200px #0b0c12;'>Host: e9fd1433189542ddb48579fceaa89b73.apig.cn-north-4.huaweicloudapis.com</span>
<span class="t" style='left:1018px;top:456.1px;font-size:16.6px;line-height:25px;color:#0b0c12;font-family:"Liberation Mono","Noto Sans Mono CJK SC",monospace;letter-spacing:-0.333px;-webkit-text-stroke:0.200px #0b0c12;'>User-Agent: APIGatewayDebugClient/1.0</span>
<span class="t" style='left:1018px;top:481.1px;font-size:16.6px;line-height:25px;color:#0b0c12;font-family:"Liberation Mono","Noto Sans Mono CJK SC",monospace;letter-spacing:-0.333px;-webkit-text-stroke:0.200px #0b0c12;'>Myheader: bob's header</span>
<span class="t" style='left:1018px;top:506.1px;font-size:16.6px;line-height:25px;color:#0b0c12;font-family:"Liberation Mono","Noto Sans Mono CJK SC",monospace;letter-spacing:-0.333px;-webkit-text-stroke:0.200px #0b0c12;'>X-Apig-Mode: debug</span>
<span class="t" style='left:1005px;top:741.5px;font-size:15.4px;line-height:24px;color:#252b3a;letter-spacing:0.102px;'>响应</span>
<div class="a code" style="left:1006px;top:783px;width:842px;height:260px"></div>
<span class="t" style='left:1018px;top:797.1px;font-size:16.6px;line-height:25px;color:#0b0c12;font-family:"Liberation Mono","Noto Sans Mono CJK SC",monospace;letter-spacing:-0.333px;-webkit-text-stroke:0.200px #0b0c12;'>HTTP/1.1 200 OK</span>
<span class="t" style='left:1018px;top:822.1px;font-size:16.6px;line-height:25px;color:#0b0c12;font-family:"Liberation Mono","Noto Sans Mono CJK SC",monospace;letter-spacing:-0.333px;-webkit-text-stroke:0.200px #0b0c12;'>Content-Length: 488</span>
<span class="t" style='left:1018px;top:847.1px;font-size:16.6px;line-height:25px;color:#0b0c12;font-family:"Liberation Mono","Noto Sans Mono CJK SC",monospace;letter-spacing:-0.333px;-webkit-text-stroke:0.200px #0b0c12;'>Connection: keep-alive</span>
<span class="t" style='left:1018px;top:872.1px;font-size:16.6px;line-height:25px;color:#0b0c12;font-family:"Liberation Mono","Noto Sans Mono CJK SC",monospace;letter-spacing:-0.333px;-webkit-text-stroke:0.200px #0b0c12;'>Content-Type: application/json</span>
<span class="t" style='left:1018px;top:897.1px;font-size:16.6px;line-height:25px;color:#0b0c12;font-family:"Liberation Mono","Noto Sans Mono CJK SC",monospace;letter-spacing:-0.333px;-webkit-text-stroke:0.200px #0b0c12;'>Date: Fri, 25 Nov 2022 08:39:04 GMT</span>
<span class="t" style='left:1018px;top:922.1px;font-size:16.6px;line-height:25px;color:#0b0c12;font-family:"Liberation Mono","Noto Sans Mono CJK SC",monospace;letter-spacing:-0.333px;-webkit-text-stroke:0.200px #0b0c12;'>Server: api-gateway</span>
<span class="t" style='left:1018px;top:947.1px;font-size:16.6px;line-height:25px;color:#0b0c12;font-family:"Liberation Mono","Noto Sans Mono CJK SC",monospace;letter-spacing:-0.333px;-webkit-text-stroke:0.200px #0b0c12;'>Strict-Transport-Security: max-age=31536000; includeSubdomains;</span>
<span class="t" style='left:1018px;top:972.1px;font-size:16.6px;line-height:25px;color:#0b0c12;font-family:"Liberation Mono","Noto Sans Mono CJK SC",monospace;letter-spacing:-0.333px;-webkit-text-stroke:0.200px #0b0c12;'>X-Apig-Latency: 495</span>
<span class="t" style='left:1018px;top:997.1px;font-size:16.6px;line-height:25px;color:#0b0c12;font-family:"Liberation Mono","Noto Sans Mono CJK SC",monospace;letter-spacing:-0.333px;-webkit-text-stroke:0.200px #0b0c12;'>X-Apig-Ratelimit-Api: remain:99,limit:100,time:1 minute</span>
<span class="t" style='left:1018px;top:1022.1px;font-size:16.6px;line-height:25px;color:#0b0c12;font-family:"Liberation Mono","Noto Sans Mono CJK SC",monospace;letter-spacing:-0.333px;-webkit-text-stroke:0.200px #0b0c12;'>X-Apig-Ratelimit-Api: remain:14996,limit:15000,time:1 second</span>
<svg style="left:0;top:0" width="1920" height="1030" viewBox="0 0 1920 1030"><rect x="94.5" y="355.5" width="304" height="61" fill="none" stroke="#f93738" stroke-width="3"/><rect x="95.5" y="462.5" width="785" height="178" fill="none" stroke="#f93738" stroke-width="3"/><rect x="97.5" y="688.5" width="763" height="95" fill="none" stroke="#f93738" stroke-width="3"/><rect x="1014.25" y="401.25" width="36.5" height="30.5" fill="none" stroke="#f93738" stroke-width="2.5"/><rect x="1142.25" y="396.25" width="209.5" height="34.5" fill="none" stroke="#f93738" stroke-width="2.5"/><rect x="1006.25" y="480.25" width="246.5" height="28" fill="none" stroke="#f93738" stroke-width="2.5"/><polygon points="412.0,384.5 703.1,402.3 994.3,419.1 992.9,422.9 1010.0,415.8 993.7,406.9 994.7,410.9 703.4,396.7 412.0,383.5" fill="#f93738"/><polygon points="818.7,535.0 969.8,487.4 1120.6,439.0 1120.6,442.8 1134.0,430.2 1115.7,428.0 1118.0,431.2 968.0,482.1 818.3,534.0" fill="#f93738"/><polygon points="832.9,739.8 913.3,629.3 992.8,518.3 994.4,520.9 998.0,503.0 982.4,512.5 985.4,513.1 908.3,625.9 832.1,739.2" fill="#f93738"/></svg>
<div class="a" style="left:1859px;top:704px;width:40px;height:164px;background:#fff;box-shadow:-2px 2px 9px rgba(0,0,0,0.170)"></div>
<div class="a" style="left:1859px;top:659px;width:40px;height:40px;background:#e4726b;box-shadow:-2px 2px 7px rgba(0,0,0,0.150)"></div>
<svg style="left:1868.5px;top:668.6px;" width="20" height="18" viewBox="0 0 20 18"><path d="M2.500 1H17.500A1.500 1.500 0 0 1 19 2.500V11.500A1.500 1.500 0 0 1 17.500 13H12.500L10 15.800L7.500 13H2.500A1.500 1.500 0 0 1 1 11.500V2.500A1.500 1.500 0 0 1 2.500 1Z" stroke="#fff" stroke-width="1.300" fill="none" stroke-linejoin="round"/><path d="M6.300 7H6.400M10 7H10.100M13.700 7H13.800" stroke="#fff" stroke-width="1.700" stroke-linecap="round"/></svg>
<svg style="left:1868px;top:715px;" width="20" height="20" viewBox="0 0 20 20"><path d="M17.100 7.800A7.800 7.800 0 1 0 12.300 17.100M19 8.300L13.600 17.200M7 12.400Q9.900 15 12.800 12.400" stroke="#3c414e" stroke-width="1.050" fill="none" stroke-linecap="round"/><circle cx="6.900" cy="8.900" r="0.800" fill="#3c414e"/><circle cx="13.100" cy="8.900" r="0.800" fill="#3c414e"/></svg>
<div class="a" style="left:1860px;top:745px;width:38px;height:1px;background:#dfe1e6"></div>
<svg style="left:1868.3px;top:756px;" width="22" height="20" viewBox="0 0 22 20"><circle cx="11" cy="10" r="7.400" stroke="#111318" stroke-width="1.050" fill="none"/><circle cx="11" cy="10" r="5.400" stroke="#111318" stroke-width="1.050" fill="none"/><ellipse cx="1.900" cy="10" rx="1.500" ry="2.400" fill="#111318"/><ellipse cx="20.100" cy="10" rx="1.500" ry="2.400" fill="#111318"/><path d="M7.400 11.200Q11 15.400 14.600 11.200Q11 13 7.400 11.200Z" fill="#111318"/><path d="M19.300 12.300C18.500 15.500 16 17.300 13 17.600" stroke="#111318" stroke-width="1.050" fill="none"/><circle cx="12.800" cy="17.600" r="0.800" fill="#111318"/></svg>
<svg style="left:1870.3px;top:796.8px;" width="18" height="18" viewBox="0 0 18 18"><circle cx="9" cy="9" r="8" stroke="#22252d" stroke-width="1.100" fill="none"/><path d="M6.700 7.200A2.350 2.350 0 1 1 9 9.600V11.300" stroke="#22252d" stroke-width="1.150" fill="none"/><path d="M9 13.500V13.600" stroke="#22252d" stroke-width="1.400" stroke-linecap="round"/></svg>
<svg style="left:1869.6px;top:837.9px;" width="18" height="19" viewBox="0 0 18 19"><path d="M12.300 1.200H3.600A1.800 1.800 0 0 0 1.800 3V16A1.800 1.800 0 0 0 3.600 17.800H14.400A1.800 1.800 0 0 0 16.200 16V7.300" stroke="#22252d" stroke-width="1.200" fill="none" stroke-linecap="round"/><path d="M5.300 8.700H9.200M5.300 11.600H12.700M16.200 1.900L10.800 7.300" stroke="#22252d" stroke-width="1.200" fill="none" stroke-linecap="round"/></svg>
</body></html>
